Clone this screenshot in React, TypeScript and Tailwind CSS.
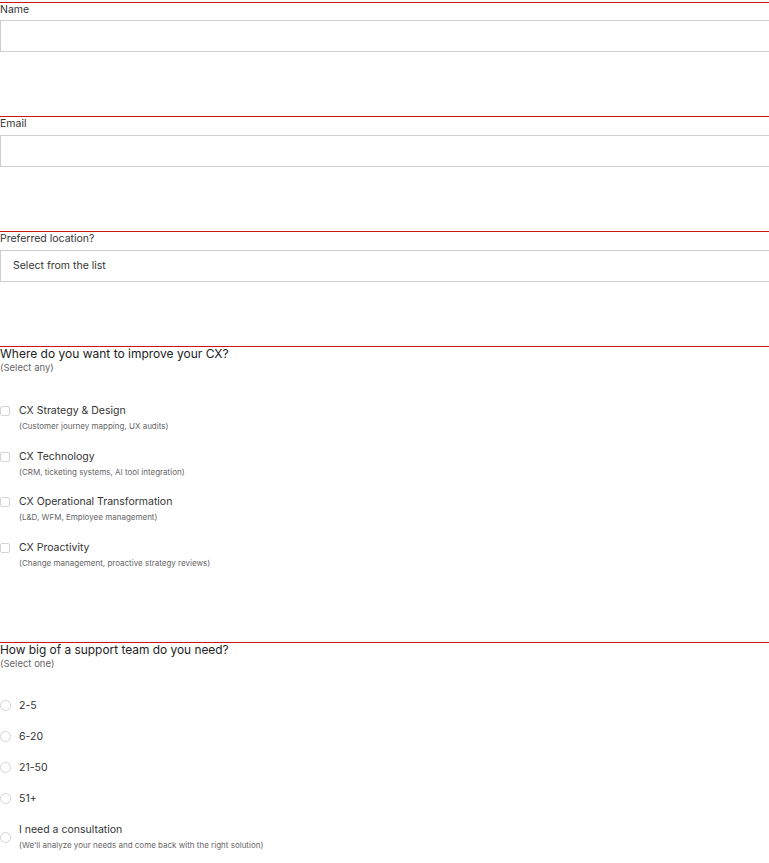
import React from 'react'

const font = { fontFamily: 'Inter, "Liberation Sans", Arial, sans-serif' }

function TextField({ label, last }: { label: string; last?: boolean }) {
  return (
    <div className={`border-t border-[#d0121b] ${last ? 'h-[115px]' : 'h-[114px]'}`}>
      <label className={`block text-[10.5px] leading-[13px] text-[#333] ${last ? 'mb-[5px]' : 'mb-[4px]'}`}>
        {label}
      </label>
      <input
        className="block w-[820px] h-[32px] border border-[#cfcfcf] bg-white outline-none"
        type="text"
      />
    </div>
  )
}

function SelectField({ label }: { label: string }) {
  return (
    <div className="border-t border-[#d0121b] h-[115px]">
      <label className="block text-[10.5px] leading-[13px] mb-[5px] text-[#333]">{label}</label>
      <div className="w-[820px] h-[32px] border border-[#cfcfcf] flex items-center pl-[12px] text-[10.5px] text-[#333]">
        Select from the list
      </div>
    </div>
  )
}

const areas = [
  ['CX Strategy & Design', '(Customer journey mapping, UX audits)'],
  ['CX Technology', '(CRM, ticketing systems, AI tool integration)'],
  ['CX Operational Transformation', '(L&D, WFM, Employee management)'],
  ['CX Proactivity', '(Change management, proactive strategy reviews)'],
]

const sizes = ['2-5', '6-20', '21-50', '51+']

export default function App() {
  return (
    <div className="w-[769px] overflow-hidden bg-white pt-[2px]" style={font}>
      <TextField label="Name" />
      <TextField label="Email" last />
      <SelectField label="Preferred location?" />

      <div className="border-t border-[#d0121b] h-[296px]">
        <h3 className="text-[12px] leading-[13px] text-[#222]">Where do you want to improve your CX?</h3>
        <p className="text-[9.5px] leading-[16px] text-[#666]">(Select any)</p>
        <div className="pt-[27px] flex flex-col gap-[14.67px]">
          {areas.map(([title, note]) => (
            <div key={title} className="flex items-start">
              <span className="mt-[3px] w-[10px] h-[10px] rounded-[2px] border border-[#d4d4d4] shrink-0" />
              <div className="ml-[9px]">
                <div className="text-[10.5px] leading-[15px] text-[#333]">{title}</div>
                <div className="text-[8px] leading-[16px] text-[#666]">{note}</div>
              </div>
            </div>
          ))}
        </div>
      </div>

      <div className="border-t border-[#d0121b]">
        <h3 className="text-[11.9px] leading-[13px] text-[#222]">How big of a support team do you need?</h3>
        <p className="text-[9.5px] leading-[16px] text-[#666]">(Select one)</p>
        <div className="pt-[26px] flex flex-col gap-[16px]">
          {sizes.map((s) => (
            <div key={s} className="flex items-center h-[15px]">
              <span className="w-[11px] h-[11px] rounded-full border border-[#d4d4d4] shrink-0" />
              <span className="ml-[8px] text-[10.5px] text-[#333]">{s}</span>
            </div>
          ))}
          <div className="flex items-center">
            <span className="w-[11px] h-[11px] rounded-full border border-[#d4d4d4] shrink-0" />
            <div className="ml-[8px]">
              <div className="text-[10.5px] leading-[15px] text-[#333]">I need a consultation</div>
              <div className="text-[8px] leading-[16px] text-[#666]">
                (We'll analyze your needs and come back with the right solution)
              </div>
            </div>
          </div>
        </div>
      </div>
    </div>
  )
}
